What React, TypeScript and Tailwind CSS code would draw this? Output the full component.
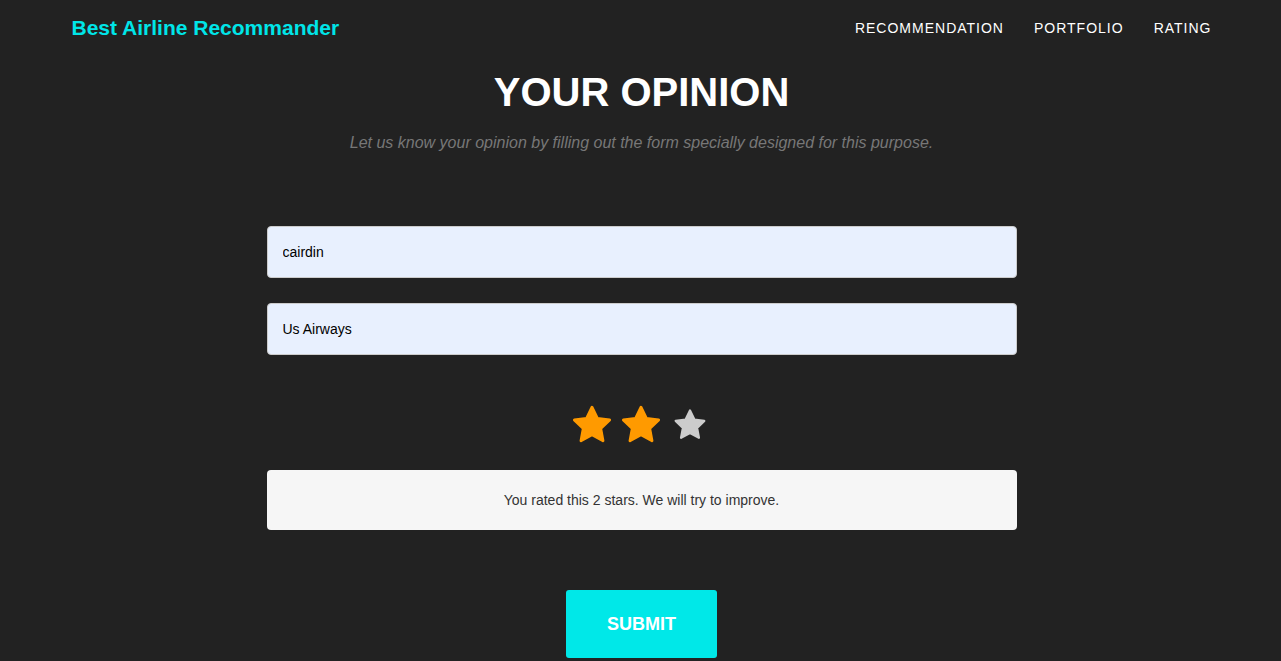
import { useState } from 'react'

const font = { fontFamily: '"Liberation Sans", Arial, sans-serif' }

function Star({ size, filled }: { size: number; filled: boolean }) {
  return (
    <span className="flex w-[49px] justify-center">
      <svg width={size} height={size} viewBox="0 0 24 24">
        <path
          d="M12 1.8l3.1 6.4 7 .9-5.1 4.9 1.3 7-6.3-3.4-6.3 3.4 1.3-7L1.9 9.1l7-.9z"
          fill={filled ? '#ff9a00' : '#cccccc'}
          stroke={filled ? '#ff9a00' : '#cccccc'}
          strokeWidth="1.6"
          strokeLinejoin="round"
        />
      </svg>
    </span>
  )
}

export default function App() {
  const [name, setName] = useState('cairdin')
  const [airline, setAirline] = useState('Us Airways')
  const rating = 2

  return (
    <div className="min-h-screen bg-[#222222] text-white" style={font}>
      {/* Navbar */}
      <nav className="mx-auto flex h-[56px] max-w-[1140px] items-center justify-between pl-[1px]">
        <a href="#" className="text-[21px] font-bold text-[#00e5e8]">
          Best Airline Recommander
        </a>
        <ul className="mr-[-1px] flex items-center gap-[30px] text-[14px] tracking-[1px] text-white">
          <li><a href="#">RECOMMENDATION</a></li>
          <li><a href="#">PORTFOLIO</a></li>
          <li><a href="#">RATING</a></li>
        </ul>
      </nav>

      {/* Header */}
      <div className="pl-[2px] text-center">
        <h2 className="mt-[13px] text-[40px] font-bold leading-[46px]">YOUR OPINION</h2>
        <p className="mt-[16px] text-[16px] italic text-[#777777]">
          Let us know your opinion by filling out the form specially designed for this purpose.
        </p>
      </div>

      {/* Form */}
      <form className="mx-auto mt-[71px] flex w-[752px] flex-col pl-[2px]" onSubmit={(e) => e.preventDefault()}>
        <input
          value={name}
          onChange={(e) => setName(e.target.value)}
          className="h-[52px] rounded-[4px] border border-[#cccccc] bg-[#e8f0fe] px-[15px] text-[14px] text-black outline-none"
        />
        <input
          value={airline}
          onChange={(e) => setAirline(e.target.value)}
          className="mt-[25px] h-[52px] rounded-[4px] border border-[#cccccc] bg-[#e8f0fe] px-[15px] text-[14px] text-black outline-none"
        />

        <div className="mt-[48px] flex h-[44px] items-center justify-center pr-[2px]">
          <Star size={42} filled={rating >= 1} />
          <Star size={42} filled={rating >= 2} />
          <Star size={34} filled={rating >= 3} />
        </div>

        <div className="mt-[23px] flex h-[60px] items-center justify-center rounded-[4px] bg-[#f6f6f6] text-[14px] text-[#333333]">
          You rated this {rating} stars. We will try to improve.
        </div>

        <div className="mt-[60px] flex justify-center">
          <button
            type="submit"
            className="h-[68px] w-[151px] rounded-[3px] bg-[#00e8e8] text-[18px] font-bold text-white"
          >
            SUBMIT
          </button>
        </div>
      </form>
    </div>
  )
}
